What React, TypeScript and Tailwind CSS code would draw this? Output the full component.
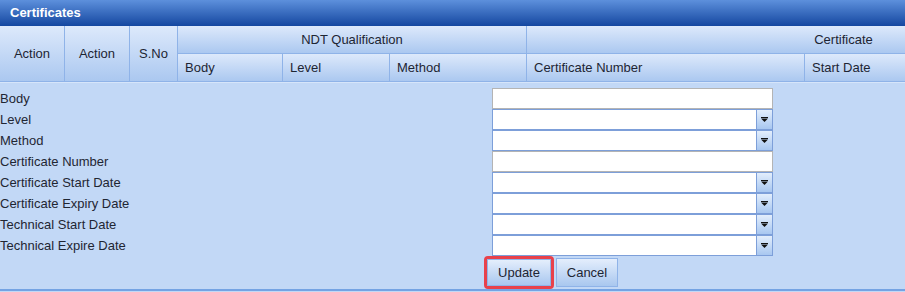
import React from 'react';

const FIELDS: { label: string; kind: 'text' | 'select' }[] = [
  { label: 'Body', kind: 'text' },
  { label: 'Level', kind: 'select' },
  { label: 'Method', kind: 'select' },
  { label: 'Certificate Number', kind: 'text' },
  { label: 'Certificate Start Date', kind: 'select' },
  { label: 'Certificate Expiry Date', kind: 'select' },
  { label: 'Technical Start Date', kind: 'select' },
  { label: 'Technical Expire Date', kind: 'select' },
];

const cell =
  'flex items-center border-r border-b border-[#8fb3e8] bg-gradient-to-b from-[#dde9fb] to-[#abc8f0] text-[13px] text-[#1d2533]';

const Arrow: React.FC = () => (
  <svg width="7" height="5" viewBox="0 0 7 5">
    <rect x="0" y="0" width="7" height="1" fill="#111" />
    <polygon points="0,1.5 7,1.5 3.5,5" fill="#111" />
  </svg>
);

const Field: React.FC<{ kind: 'text' | 'select' }> = ({ kind }) => {
  if (kind === 'text') {
    return <div className="h-[21px] w-[281px] border border-[#b4b4b4] bg-white" />;
  }
  return (
    <div className="flex h-[21px] w-[281px] border border-[#7d9fd9] bg-white">
      <div className="flex-1" />
      <div className="flex w-[16px] items-center justify-center border-l border-[#7d9fd9] bg-gradient-to-b from-[#e3eefc] to-[#a8c7f0]">
        <Arrow />
      </div>
    </div>
  );
};

const App: React.FC = () => {
  return (
    <div className="h-[292px] w-[905px] overflow-hidden bg-[#c2d8f6] font-['Liberation_Sans',Arial,sans-serif]">
      <div className="flex h-[26px] items-center bg-gradient-to-b from-[#5d90dc] to-[#1447a0] px-[10px] text-[13px] font-bold text-white">
        Certificates
      </div>

      <div className="overflow-hidden">
        <div className="grid w-[1200px] grid-cols-[65px_65px_48px_105px_107px_137px_278px_120px_236px] grid-rows-[28px_28px]">
          <div className={`${cell} row-span-2 justify-center`}>Action</div>
          <div className={`${cell} row-span-2 justify-center`}>Action</div>
          <div className={`${cell} row-span-2 justify-center`}>S.No</div>
          <div className={`${cell} col-span-3 justify-center`}>NDT Qualification</div>
          <div className={`${cell} col-span-3 justify-center`}>Certificate</div>
          <div className={`${cell} pl-[7px]`}>Body</div>
          <div className={`${cell} pl-[7px]`}>Level</div>
          <div className={`${cell} pl-[7px]`}>Method</div>
          <div className={`${cell} pl-[7px]`}>Certificate Number</div>
          <div className={`${cell} pl-[7px]`}>Start Date</div>
          <div className={cell} />
        </div>
      </div>

      <div className="border-t border-[#d6e5fa] pt-[5px]">
        {FIELDS.map((f) => (
          <div key={f.label} className="grid h-[21px] grid-cols-[492px_281px] items-center">
            <span className="text-[13px] leading-none text-[#1f2633]">{f.label}</span>
            <Field kind={f.kind} />
          </div>
        ))}

        <div className="flex h-[33px] items-center gap-[2px] pl-[484px]">
          <div className="rounded-[4px] border-[3px] border-[#e8414b] p-0">
            <button className="flex h-[27px] w-[64px] items-center justify-center border border-[#8fb3e8] bg-gradient-to-b from-[#e4eefc] to-[#a9c7ef] text-[13px] text-[#1d2533]">
              Update
            </button>
          </div>
          <button className="flex h-[29px] w-[62px] items-center justify-center border border-[#8fb3e8] bg-gradient-to-b from-[#e4eefc] to-[#a9c7ef] text-[13px] text-[#1d2533]">
            Cancel
          </button>
        </div>
      </div>

      <div className="h-[2px] bg-[#74a3e3]" />
    </div>
  );
};

export default App;
